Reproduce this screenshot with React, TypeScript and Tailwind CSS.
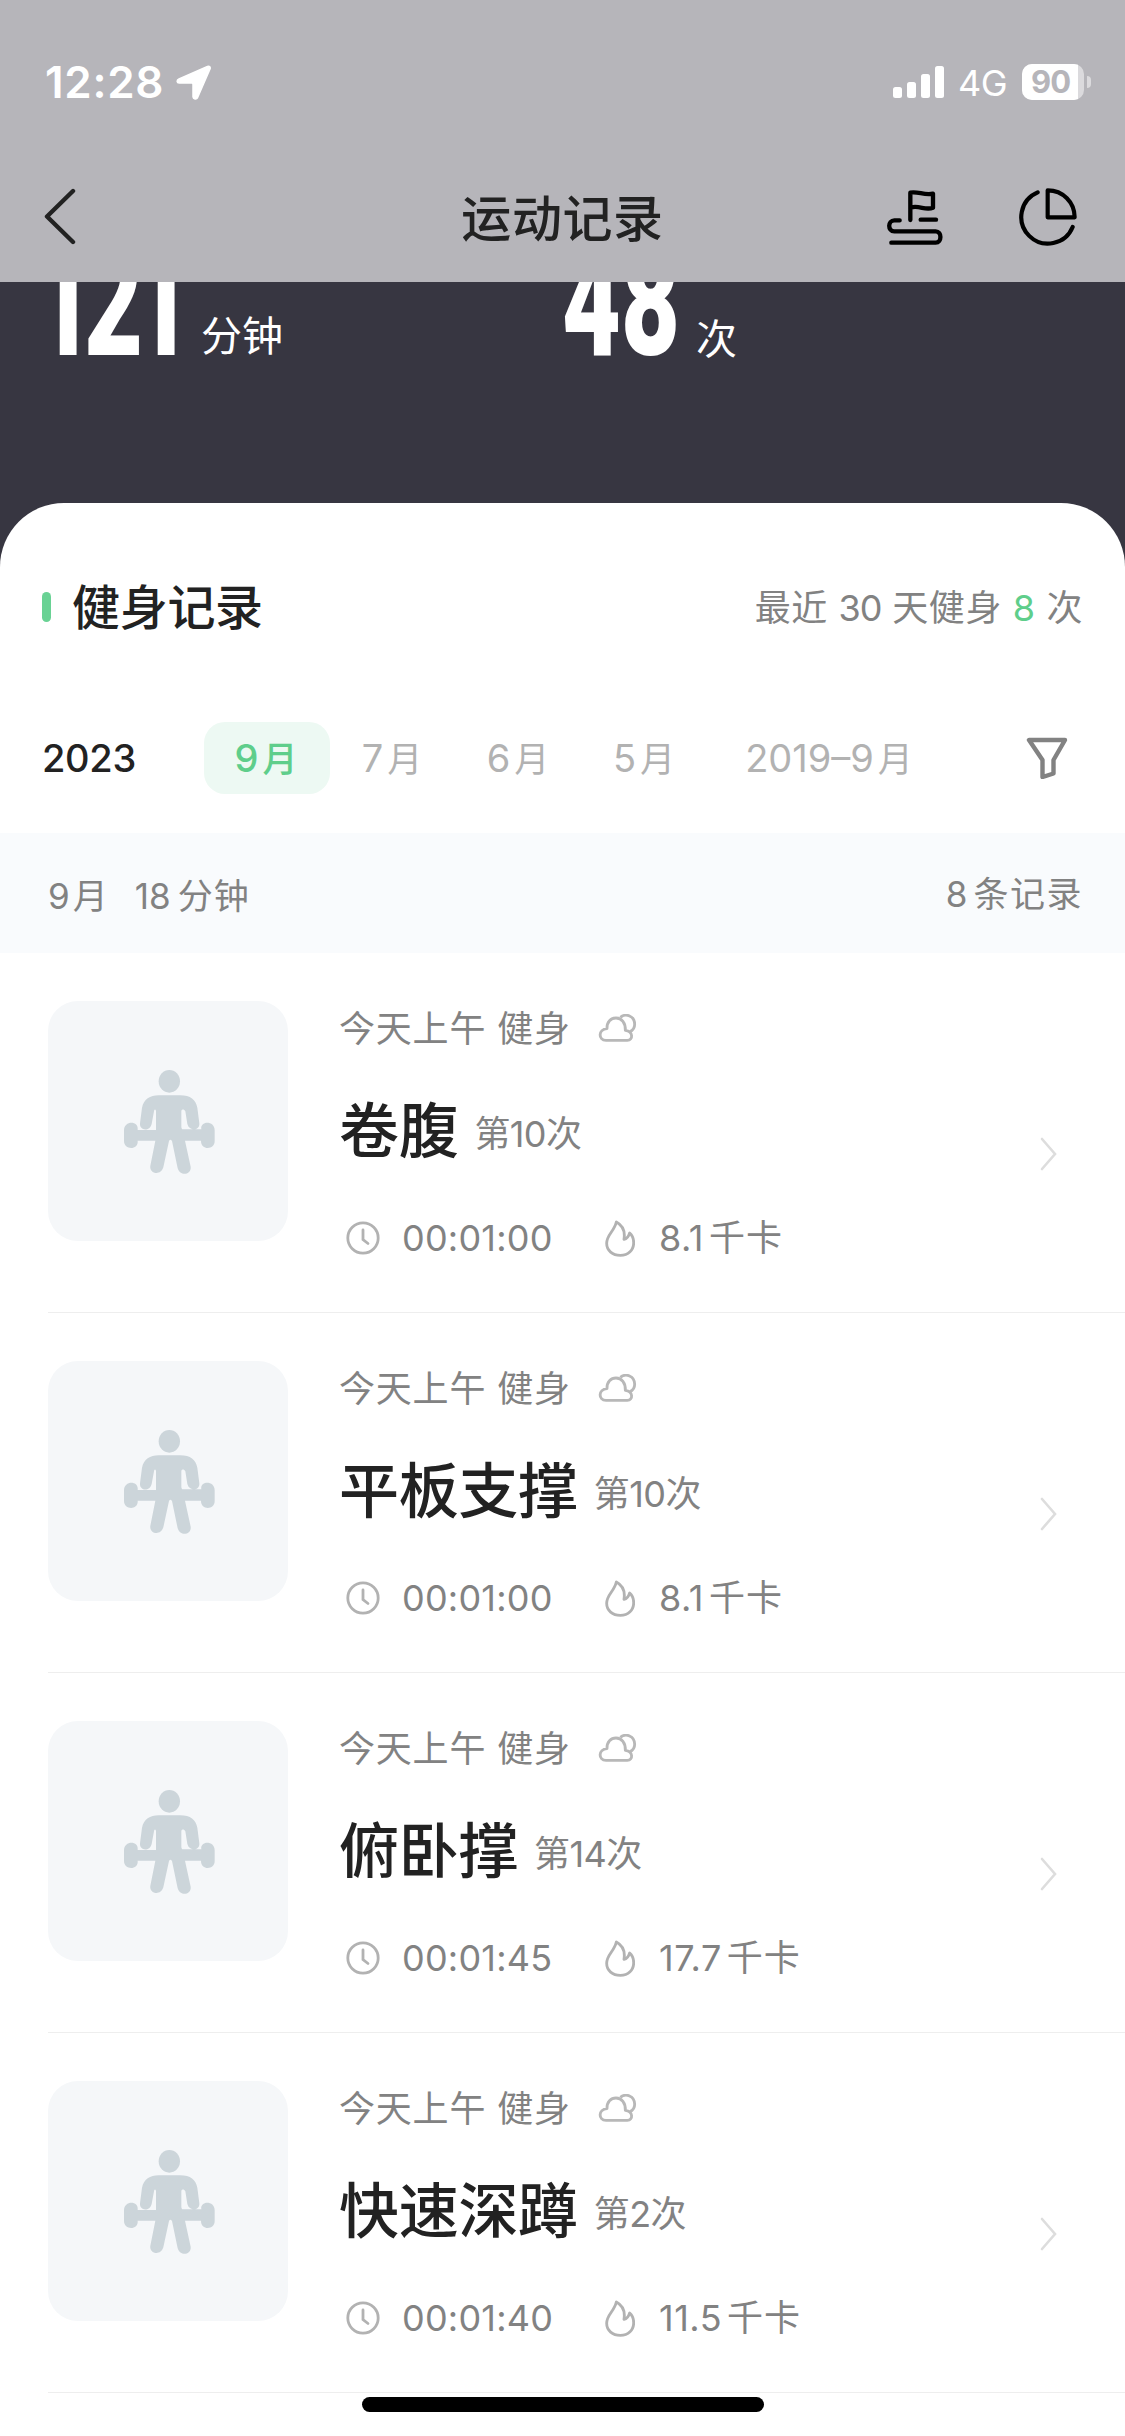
import {FunctionComponent} from "react";

type WorkoutRecord = {
    name: string
    times: number
    duration: string
    calories: string
}

type WorkoutRowParams = {
    record: WorkoutRecord
}

const months = ['7', '6', '5'];

const records: WorkoutRecord[] = [
    {name: '卷腹', times: 10, duration: '00:01:00', calories: '8.1'},
    {name: '平板支撑', times: 10, duration: '00:01:00', calories: '8.1'},
    {name: '俯卧撑', times: 14, duration: '00:01:45', calories: '17.7'},
    {name: '快速深蹲', times: 2, duration: '00:01:40', calories: '11.5'},
];

const StatusBar: FunctionComponent = () => (
    <div className="flex h-[165px] items-start justify-between pl-[45px] pr-[34px] pt-[64px] text-white">
        <div className="flex h-9 items-center">
            <span className="w-[131px] text-[44px] font-semibold leading-9 tracking-[0.7px]">12:28</span>
            <svg className="h-[36px] w-[36px]" viewBox="0 0 36 36" fill="currentColor" stroke="currentColor" strokeWidth="1.5" strokeLinejoin="round">
                <path
                    d="M3 15 31.500 2.500c2-.9 3.200.6 2.500 2.500L21.400 34c-.8 1.600-4.200 1.500-4.400-1V20.300c0-.8-.4-1.200-1.200-1.200H3.200c-2.600 0-2.800-2.900-.2-4.100Z"
                />
            </svg>
        </div>
        <div className="flex h-9 items-center">
            <svg className="h-[36px] w-[52px]" viewBox="0 0 52 36" fill="currentColor">
                <rect x="0" y="23" width="9" height="11" rx="2.5"/>
                <rect x="14" y="18" width="9" height="16" rx="2.5"/>
                <rect x="28" y="10" width="9" height="24" rx="2.5"/>
                <rect x="42" y="2" width="9" height="32" rx="2.5"/>
            </svg>
            <span className="ml-[13px] w-[64px] pt-[2px] text-[36px] leading-9 tracking-[-0.5px]">4G</span>
            <div className="flex h-9 w-[62px] overflow-hidden rounded-[10px] bg-white/50">
                <span className="w-[56px] bg-white pl-[9px] text-[31px] font-bold leading-9 tracking-[-1px] text-[#b6b5ba]">90</span>
            </div>
            <div className="ml-[3px] h-[12px] w-[4px] rounded-r-full bg-white/50"></div>
        </div>
    </div>
);

const Header: FunctionComponent = () => (
    <header className="h-[282px] bg-[#b6b5ba]">
        <StatusBar/>
        <div className="flex h-[104px] items-center justify-between pl-[43px] pr-[47px]">
            <svg className="h-[58px] w-[197px]" viewBox="0 0 197 58" fill="none" stroke="#222" strokeWidth="4.4" strokeLinecap="round" strokeLinejoin="round">
                <path d="M30 3 4 28.500 30 54"/>
            </svg>
            <h1 className="pt-[4px] text-[50px] font-medium leading-[58px] tracking-[0.6px] text-[#222]">运动记录</h1>
            <div className="flex w-[193px] justify-between">
                <svg className="h-[60px] w-[60px]" viewBox="75 53 180 180" fill="none" stroke="#000" strokeWidth="13" strokeLinecap="round" strokeLinejoin="round">
                    <path d="M151 152V70c22-5 42 9 68 3v42c-22 9-40-7-65-1"/>
                    <path d="M119 153h-16c-20 0-21 33 0 33h124c19 0 19 34 0 34H94"/>
                    <path d="M182 151h46"/>
                </svg>
                <svg className="h-[60px] w-[60px]" viewBox="472 53 180 180" fill="none" stroke="#000" strokeWidth="12.5" strokeLinecap="round" strokeLinejoin="round">
                    <path d="M531 69a80 80 0 1 0 105 104"/>
                    <path d="M561 63c46 0 81 36 81 81h-81Z"/>
                </svg>
            </div>
        </div>
    </header>
);

const Stats: FunctionComponent = () => (
    <section className="flex h-[221px] items-start overflow-hidden text-white">
        <div className="flex w-[516px] pl-[35px]">
            <div className="h-[100px] w-[166px]">
                <p className="-mt-[54px] w-[240px] origin-left scale-x-[0.66] font-[Roboto] text-[154px] font-black leading-[150px] tracking-[-15px]">121</p>
            </div>
            <p className="pt-[30px] text-[41px] leading-[48px]">分钟</p>
        </div>
        <div className="flex pl-[46px]">
            <div className="h-[100px] w-[134px]">
                <p className="-mt-[54px] w-[190px] origin-left scale-x-[0.66] font-[Roboto] text-[154px] font-black leading-[150px]">48</p>
            </div>
            <p className="pt-[33px] text-[41px] leading-[48px]">次</p>
        </div>
    </section>
);

const MonthTabs: FunctionComponent = () => (
    <nav className="mt-[93px] flex h-[72px] items-center text-[38px] leading-[72px]">
        <span className="w-[204px] pl-[42px] font-medium tracking-[-0.3px] text-[#222]">2023</span>
        <span className="h-[72px] w-[126px] rounded-[21px] bg-[#edf9f3] pr-[2px] text-center font-medium text-[#5fce8b]">
            9<span className="ml-[4px] text-[35px]">月</span>
        </span>
        {
            months.map((month) => (
                <span key={month} className="h-[72px] w-[126px] pr-[2px] text-center text-[#b2b2b2]">
                    {month}<span className="ml-[4px] text-[35px]">月</span>
                </span>
            ))
        }
        <span className="h-[72px] w-[242px] text-center text-[#b2b2b2]">
            2019–9<span className="ml-[4px] text-[35px]">月</span>
        </span>
        <svg className="ml-auto mr-[57px] h-[42px] w-[42px]" viewBox="0 0 42 42" fill="none" stroke="#828282" strokeWidth="4.4" strokeLinejoin="round">
            <path d="M3 3h36L27.500 23v13.500L16.500 40V23Z"/>
        </svg>
    </nav>
);

const WorkoutRow: FunctionComponent<WorkoutRowParams> = ({record}) => {
    return (
        <li className="ml-12 flex h-[360px] border-b border-[#eee]">
            <svg className="mt-12 h-[240px] w-[240px] rounded-[30px] bg-[#f5f7f9]" viewBox="54 63 720 720" fill="#ccd5da">
                <ellipse cx="418" cy="304" rx="32" ry="34"/>
                <path
                    d="M378 450V392c-3-6-5-3-6 2l-7 38c-6 24-37 21-35-2l6-47c5-25 24-37 50-37h64c32 0 47 13 52 37l6 47c2 23-30 25-36 2l-6-38c-3-6-10-7-12-2v46c0 5 1 8 3 10h57c-5-26 40-28 40 3v32c0 28-42 28-41-1H465l17 78c3 24-31 31-39 5L426 483c-4-5-6-5-9 0l-17 79c-8 27-43 19-39-5l15-75h-53c3 29-41 29-41 1v-32c0-30 45-30 41-1h53Z"
                />
            </svg>
            <div className="ml-[51px] mt-[55px] flex-1 text-[36px] text-[#828282]">
                <p className="flex h-[42px] items-center leading-[42px]">
                    <span className="w-[259px] tracking-[0.8px]">今天上午 健身</span>
                    <svg className="h-[30px] w-[39px]" viewBox="24 40 117 90" fill="none" stroke="#b8b8b8" strokeWidth="8.5" strokeLinejoin="round">
                        <path d="M48 119c-24 0-24-33 3-35-1-21 12-32 27-32 17 0 29 14 28 37 24 3 24 30 6 30Z"/>
                        <path d="M91 50c16-13 43-5 43 21 0 10-5 18-14 22"/>
                    </svg>
                </p>
                <p className="mt-[46px] flex h-[70px] leading-[70px]">
                    <span className="text-[60px] font-medium tracking-[-0.3px] text-[#222]">{record.name}</span>
                    <span className="ml-[16px] pt-[3px] tracking-[-0.6px]">第{record.times}次</span>
                </p>
                <p className="mt-[51px] flex h-[42px] items-center leading-[42px]">
                    <svg className="ml-[7px] h-[34px] w-[34px]" viewBox="0 0 34 34" fill="none" stroke="#b2b2b2" strokeWidth="2.8" strokeLinecap="round">
                        <circle cx="17" cy="17" r="15.200"/>
                        <path d="M17 9v9.500l5 4"/>
                    </svg>
                    <span className="ml-[22px] w-[203px] tracking-[0.2px]">{record.duration}</span>
                    <svg className="h-[37px] w-[30px]" viewBox="46 28 90 111" fill="none" stroke="#b2b2b2" strokeWidth="8.5" strokeLinejoin="round">
                        <path d="M80 34c-6 28-29 38-29 64 0 22 18 36 41 36 24 0 40-16 40-38 0-14-4-22-12-29-3 10-8 17-17 19 4-25-4-42-23-52Z"/>
                    </svg>
                    <span className="ml-[24px] tracking-[0.5px]">{record.calories}<span className="ml-[5px] tracking-[1px]">千卡</span></span>
                </p>
            </div>
            <svg className="mr-[67px] mt-[183px] h-[36px] w-[18px]" viewBox="0 0 18 36" fill="none" stroke="#ddd" strokeWidth="2.6" strokeLinecap="round">
                <path d="m2 3 13 15L2 33"/>
            </svg>
        </li>
    );
}

const App: FunctionComponent = () => {
    return (
        <main className="relative h-[2436px] w-[1125px] overflow-hidden bg-[#373641] font-[Inter,'Noto_Sans_CJK_SC',sans-serif]">
            <Header/>
            <Stats/>
            <div className="h-[1933px] rounded-t-[64px] bg-white">
                <div className="flex h-[126px] items-end pl-[42px] pr-[42px]">
                    <div className="mb-[7px] h-[30px] w-[9px] rounded-full bg-[#69d294]"></div>
                    <h2 className="-mb-[3px] ml-[21px] text-[48px] font-medium leading-[48px] tracking-[-0.3px] text-[#222]">健身记录</h2>
                    <p className="ml-auto text-[36px] leading-[42px] tracking-[0.6px] text-[#828282]">
                        最近 <span className="tracking-[-1px]">30</span> 天健身 <span className="text-[#5fce8b]">8</span> 次
                    </p>
                </div>
                <MonthTabs/>
                <div className="mt-[39px] flex h-[120px] items-center justify-between bg-[#f9fbfd] pl-[48px] pr-[42px] text-[35px] text-[#828282]">
                    <p className="pt-[6px]">
                        9<span className="ml-[3px] mr-[27px]">月</span>18<span className="ml-[7px] tracking-[1px]">分钟</span>
                    </p>
                    <p className="pt-[2px]">8<span className="ml-[6px] tracking-[1.500px]">条记录</span></p>
                </div>
                <ul>
                    {records.map((record) => <WorkoutRow key={record.name} record={record}/>)}
                </ul>
            </div>
            <div className="absolute bottom-6 left-[362px] h-[15px] w-[402px] rounded-full bg-black"></div>
        </main>
    );
}

export default App;
